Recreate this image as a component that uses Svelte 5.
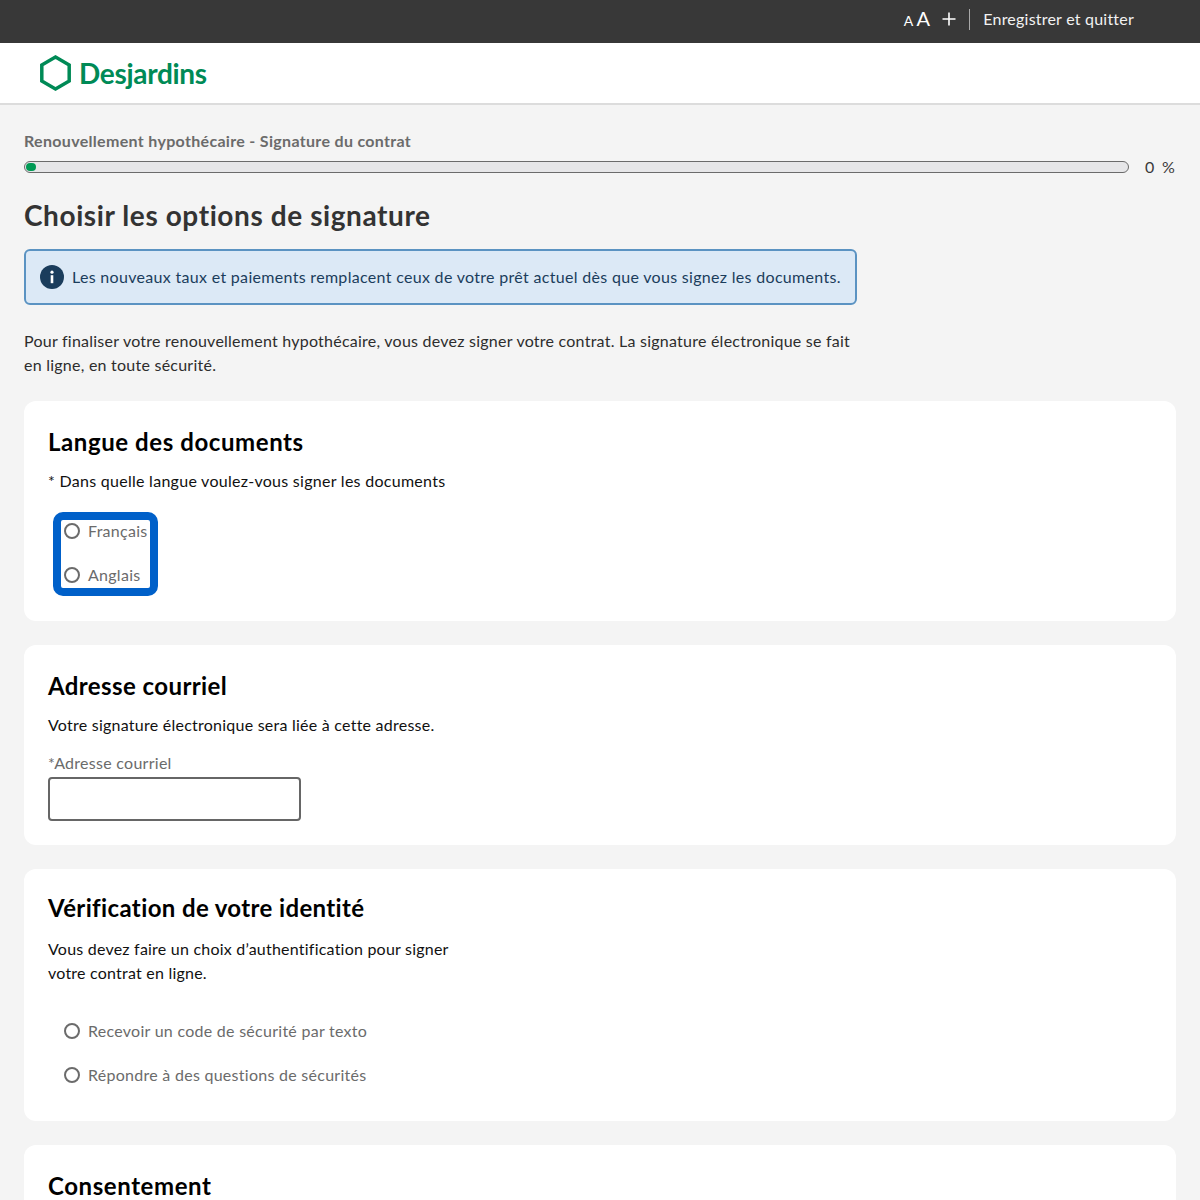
<script>
  const languages = ['Français', 'Anglais'];
  const methods = ['Recevoir un code de sécurité par texto', 'Répondre à des questions de sécurités'];
</script>

<div class="page">
  <header class="topbar">
    <div class="font-size"><span class="small-a">A</span><span class="big-a">A</span></div>
    <svg class="plus" width="14" height="14" viewBox="0 0 14 14" aria-hidden="true"><path d="M7 0.5v13M0.5 7h13" stroke="#fff" stroke-width="1.6" fill="none"/></svg>
    <span class="divider"></span>
    <span class="save">Enregistrer et quitter</span>
  </header>

  <div class="brand">
    <svg width="31" height="36" viewBox="0 0 31 36" aria-hidden="true"><path d="M15.5 2.1 29.2 10V26L15.5 33.9 1.8 26V10Z" fill="none" stroke="#008a56" stroke-width="3.5"/></svg>
    <span class="wordmark">Desjardins</span>
  </div>

  <main class="content">
    <div class="crumb">Renouvellement hypothécaire - Signature du contrat</div>
    <div class="progress-row">
      <div class="track"><div class="fill"></div></div>
      <span class="pct">0 %</span>
    </div>
    <h1>Choisir les options de signature</h1>

    <div class="notice">
      <svg width="24" height="24" viewBox="0 0 24 24" aria-hidden="true"><circle cx="12" cy="12" r="12" fill="#1b3d5c"/><circle cx="12" cy="7.2" r="1.6" fill="#fff"/><rect x="10.7" y="10.2" width="2.6" height="8" fill="#fff"/></svg>
      <span>Les nouveaux taux et paiements remplacent ceux de votre prêt actuel dès que vous signez les documents.</span>
    </div>

    <p class="intro">Pour finaliser votre renouvellement hypothécaire, vous devez signer votre contrat. La signature électronique se fait en ligne, en toute sécurité.</p>

    <section class="card">
      <h2 class="wide">Langue des documents</h2>
      <p class="lead roomy">* Dans quelle langue voulez-vous signer les documents</p>
      <div class="focus-ring">
        {#each languages as l}
          <label class="radio"><span class="dot"></span><span>{l}</span></label>
        {/each}
      </div>
    </section>

    <section class="card">
      <h2>Adresse courriel</h2>
      <p class="lead">Votre signature électronique sera liée à cette adresse.</p>
      <label class="field-label" for="email">*Adresse courriel</label>
      <input id="email" class="input" type="text" />
    </section>

    <section class="card">
      <h2 class="tight">Vérification de votre identité</h2>
      <p class="lead narrow">Vous devez faire un choix d’authentification pour signer votre contrat en ligne.</p>
      <div class="methods">
        {#each methods as m}
          <label class="radio"><span class="dot"></span><span>{m}</span></label>
        {/each}
      </div>
    </section>

    <section class="card last">
      <h2 class="wide">Consentement</h2>
    </section>
  </main>
</div>

<style>
  :global(html), :global(body) { margin: 0; height: 1200px; overflow: hidden; }
  .page { font-family: Lato, "Noto Sans", sans-serif; font-size: 16px; line-height: 24px; color: #2d2d2d; background: #f4f4f4; height: 1200px; overflow: hidden; letter-spacing: 0.27px; }
  .topbar { height: 43px; background: #383838; color: #fff; display: flex; align-items: center; padding: 0 66px 5px 0; justify-content: flex-end; box-sizing: border-box; }
  .font-size { display: flex; align-items: baseline; gap: 3px; margin-right: 12px; }
  .small-a { font-size: 14px; }
  .big-a { font-size: 20px; }
  .plus { margin-right: 13px; }
  .divider { width: 1px; height: 21px; background: #a8a8a8; margin-right: 13px; }
  .save { color: #f2f2f2; letter-spacing: 0.22px; }
  .brand { height: 60px; background: #fff; border-bottom: 2px solid #dcdcdc; display: flex; align-items: center; padding-left: 40px; gap: 8px; }
  .wordmark { font-size: 28px; font-weight: 700; color: #008a56; letter-spacing: -0.3px; }
  .content { padding: 24px 24px 0; }
  .crumb { font-weight: 700; color: #6b6b6b; letter-spacing: 0.32px; }
  .progress-row { display: flex; align-items: center; gap: 16px; margin-top: 2px; height: 24px; }
  .track { flex: 1; height: 12px; box-sizing: border-box; border: 1px solid #6b6b6b; border-radius: 6px; background: #e6e6e8; padding: 1px; }
  .fill { width: 10px; height: 8px; border-radius: 4px; background: #009a55; }
  .pct { color: #3a3a3a; word-spacing: 3px; margin-right: 1px; }
  h1 { margin: 18px 0 0; font-size: 28px; line-height: 36px; font-weight: 700; color: #333; letter-spacing: 0.59px; }
  .notice { margin-top: 16px; width: 833px; height: 56px; box-sizing: border-box; border: 2px solid #5b93c2; border-radius: 6px; background: #dce9f6; display: flex; align-items: center; gap: 8px; padding-left: 14px; color: #1b3d5c; white-space: nowrap; letter-spacing: 0.31px; }
  .intro { margin: 24px 0 0; width: 840px; color: #2d2d2d; letter-spacing: 0.24px; }
  .card { margin-top: 24px; background: #fff; border-radius: 12px; padding: 24px; }
  h2 { margin: 1px 0 -1px; font-size: 24px; line-height: 32px; font-weight: 700; color: #000; letter-spacing: 0.41px; }
  h2.wide { letter-spacing: 0.58px; }
  h2.tight { letter-spacing: 0.37px; margin: -1px 0 0; }
  .lead { margin: 12px 0 0; color: #111; letter-spacing: 0.24px; }
  .lead.roomy { letter-spacing: 0.28px; }
  .lead.narrow { width: 420px; margin-top: 13px; letter-spacing: 0.22px; }
  .focus-ring { margin: 19px 0 1px 5px; width: 105px; box-sizing: border-box; border: 8px solid #0060c9; border-radius: 10px; height: 84px; display: flex; flex-direction: column; gap: 20px; }
  .radio { display: flex; align-items: center; gap: 8px; color: #6b6b6b; height: 24px; }
  .focus-ring .radio { margin-top: -1px; margin-left: 3px; }
  .focus-ring .radio + .radio { margin-top: 0; }
  .dot { width: 16px; height: 16px; box-sizing: border-box; border: 2px solid #6b6b6b; border-radius: 50%; background: #fff; flex: none; }
  .field-label { display: block; margin-top: 14px; color: #6b6b6b; }
  .input { display: block; width: 253px; height: 44px; box-sizing: border-box; border: 2px solid #666; border-radius: 4px; background: #fff; margin-top: 2px; }
  .methods { margin: 34px 0 10px 16px; display: flex; flex-direction: column; gap: 20px; }
  .last { height: 200px; }
</style>
